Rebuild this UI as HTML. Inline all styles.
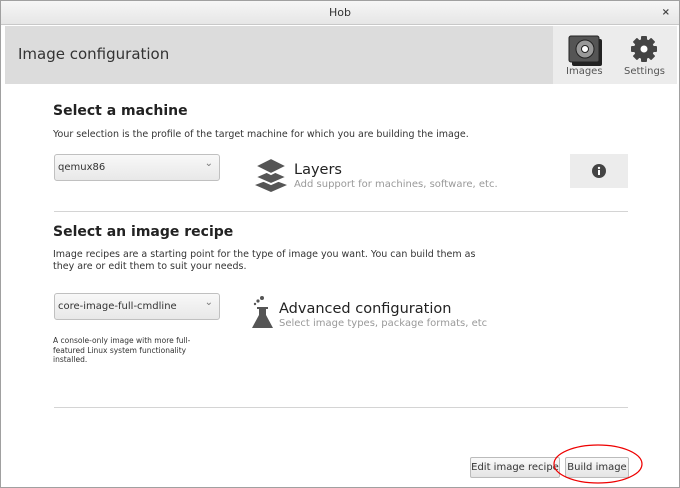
<!DOCTYPE html>
<html><head><style>
body{margin:0;width:680px;height:488px;overflow:hidden;font-family:"DejaVu Sans","Liberation Sans",sans-serif;background:#fff;position:relative}
.win{position:absolute;left:0;top:0;width:678px;height:486px;border:1px solid #a0a0a0;background:#fff}
.title{position:absolute;left:0;top:0;width:678px;height:23px;background:linear-gradient(#f6f6f6,#e6e6e6);border-bottom:1px solid #c8c8c8;text-align:center;font-size:11px;line-height:23px;color:#333}
.x{position:absolute;right:9px;top:0;font-size:10px;font-weight:bold;color:#444}
.hdr{position:absolute;left:4px;top:25px;width:548px;height:58px;background:#dcdcdc}
.hdr2{position:absolute;left:552px;top:25px;width:124px;height:58px;background:#ececec}
.t{position:absolute;white-space:nowrap}
.combo{position:absolute;left:53px;width:164px;height:25px;border:1px solid #c0c0c0;border-radius:3px;background:linear-gradient(#f8f8f8,#e8e8e8);font-size:10px;line-height:25px;color:#333;text-indent:3px}
.combo:after{content:"⌄";position:absolute;right:6px;top:-4px;font-size:10px;color:#777}
.sep{position:absolute;left:53px;width:574px;height:1px;background:#d4d4d4}
.btn{position:absolute;top:456px;height:19px;border:1px solid #bbb;border-radius:2px;background:linear-gradient(#fafafa,#e4e4e4);font-size:10px;line-height:19px;color:#333;text-align:center}
</style></head><body>
<div class="win">
<div class="title">Hob<span class="x">×</span></div>
<div class="hdr"></div><div class="hdr2"></div>
<div class="t" style="left:17px;top:44px;font-size:15px;color:#333">Image configuration</div>
<svg style="position:absolute;left:567px;top:34px" width="36" height="32" viewBox="0 0 36 32"><rect x="4" y="4" width="30" height="27" rx="2" fill="#222"/><rect x="1" y="1" width="30" height="26" rx="2" fill="#555" stroke="#222"/><circle cx="17" cy="14" r="9" fill="#999" stroke="#222"/><circle cx="17" cy="14" r="3.5" fill="#fff" stroke="#222"/></svg>
<div class="t" style="left:565px;top:65px;font-size:10px;color:#555">Images</div>
<svg style="position:absolute;left:629px;top:34px" width="28" height="28" viewBox="-14 -14 28 28"><g fill="#444"><circle r="10"/><rect x="-3" y="-13" width="6" height="26" rx="1"/><rect x="-3" y="-13" width="6" height="26" rx="1" transform="rotate(45)"/><rect x="-3" y="-13" width="6" height="26" rx="1" transform="rotate(90)"/><rect x="-3" y="-13" width="6" height="26" rx="1" transform="rotate(135)"/></g><circle r="3.5" fill="#fff"/></svg>
<div class="t" style="left:623px;top:65px;font-size:10px;color:#555">Settings</div>

<div class="t" style="left:52px;top:102px;font-size:14px;font-weight:bold;color:#222">Select a machine</div>
<div class="t" style="left:52px;top:128px;font-size:9.5px;color:#333">Your selection is the profile of the target machine for which you are building the image.</div>
<div class="combo" style="top:153px">qemux86</div>
<svg style="position:absolute;left:253px;top:156px" width="34" height="36" viewBox="0 0 34 36"><g fill="#555"><path d="M17 22 L33 28 L17 35 L1 28Z"/><path d="M17 13 L33 20 L17 27 L1 20Z" stroke="#fff" stroke-width="2"/><path d="M17 1 L33 9 L17 17 L1 9Z" stroke="#fff" stroke-width="2"/></g></svg>
<div class="t" style="left:293px;top:161px;font-size:14.5px;color:#222">Layers</div>
<div class="t" style="left:293px;top:178px;font-size:10px;color:#999">Add support for machines, software, etc.</div>
<div style="position:absolute;left:569px;top:153px;width:58px;height:34px;background:#ececec"></div>
<svg style="position:absolute;left:591px;top:163px" width="14" height="14" viewBox="0 0 14 14"><circle cx="7" cy="7" r="7" fill="#444"/><rect x="6" y="6" width="2" height="5" fill="#fff"/><circle cx="7" cy="4" r="1.2" fill="#fff"/></svg>
<div class="sep" style="top:210px"></div>

<div class="t" style="left:52px;top:223px;font-size:14px;font-weight:bold;color:#222">Select an image recipe</div>
<div class="t" style="left:52px;top:248px;font-size:9.5px;color:#333;line-height:12px">Image recipes are a starting point for the type of image you want. You can build them as<br>they are or edit them to suit your needs.</div>
<div class="combo" style="top:292px">core-image-full-cmdline</div>
<div class="t" style="left:52px;top:335px;font-size:7.5px;color:#333;line-height:9.5px">A console-only image with more full-<br>featured Linux system functionality<br>installed.</div>
<svg style="position:absolute;left:251px;top:294px" width="22" height="34" viewBox="0 0 22 34"><g fill="#555"><circle cx="6" cy="6" r="1.6"/><circle cx="10" cy="3" r="2"/><circle cx="3" cy="9" r="1.2"/><rect x="5" y="12" width="11" height="2"/><path d="M7 14 H14 V20 L21 33 H0 L7 20Z"/></g></svg>
<div class="t" style="left:278px;top:300px;font-size:14.5px;color:#222">Advanced configuration</div>
<div class="t" style="left:278px;top:317px;font-size:10px;color:#999">Select image types, package formats, etc</div>
<div class="sep" style="top:406px"></div>

<div class="btn" style="left:469px;width:88px">Edit image recipe</div>
<div class="btn" style="left:564px;width:62px">Build image</div>
<svg style="position:absolute;left:550px;top:441px" width="96" height="44"><ellipse cx="47" cy="22" rx="44" ry="19" fill="none" stroke="#e00" stroke-width="1.2"/></svg>
</div>
</body></html>
